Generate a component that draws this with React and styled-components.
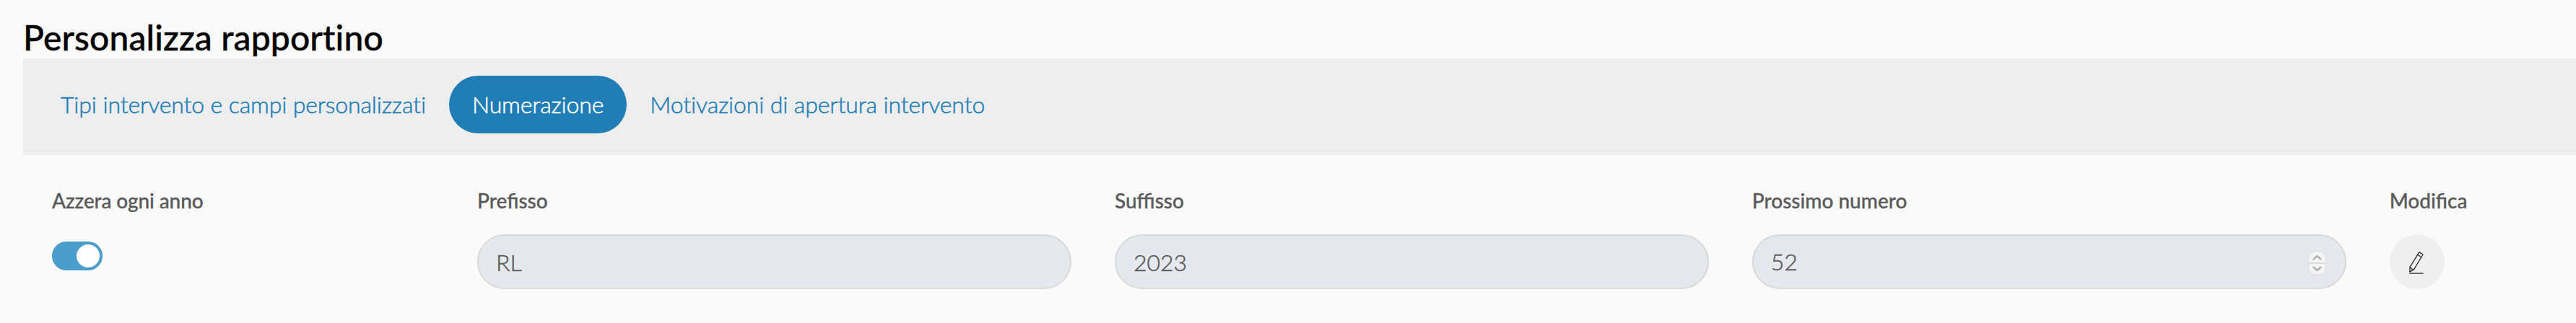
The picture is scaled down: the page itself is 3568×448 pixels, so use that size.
import React from 'react'
import styled, { createGlobalStyle } from 'styled-components'

const COLORS = {
  page: '#fafafa',
  bar: '#eeeeee',
  primary: '#207db5',
  toggle: '#4b9dcb',
  text: '#5a5a5a',
  input: '#e5e9ee',
  border: '#d8d8d8',
}

const GlobalStyle = createGlobalStyle`
  * {
    box-sizing: border-box;
  }

  body {
    margin: 0;
    background: ${COLORS.page};
    font-family: Lato, 'Liberation Sans', sans-serif;
    color: ${COLORS.text};
    overflow: hidden;
  }
`

const Page = styled.main`
  height: 448px;
  padding: 23px 0 0 24px;
  border-left: 8px solid #f9f9f9;
`

const Title = styled.h1`
  margin: 0;
  height: 58px;
  font-size: 48px;
  line-height: 58px;
  font-weight: 500;
  font-variant-ligatures: none;
  letter-spacing: 0.13px;
  color: #000;
  white-space: nowrap;
  -webkit-text-stroke: 0.4px currentColor;
`

const Tabs = styled.nav`
  display: flex;
  height: 134px;
  padding: 24px 20px;
  background: ${COLORS.bar};
`

const Tab = styled.button`
  height: 80px;
  padding: 0 32px 1px;
  border: 0;
  border-radius: 40px;
  background: ${({ $active }) => ($active ? COLORS.primary : 'transparent')};
  color: ${({ $active }) => ($active ? '#fff' : COLORS.primary)};
  font-family: inherit;
  font-size: 32px;
  font-weight: 300;
  font-variant-ligatures: none;
  letter-spacing: -0.13px;
  line-height: 78px;
  white-space: nowrap;
  -webkit-text-stroke: 0.5px currentColor;
`

const Row = styled.div`
  display: grid;
  grid-template-columns: 589.1px repeat(3, 882.85px) auto;
  padding: 44px 0 0 10px;
`

const Field = styled.div`
  display: flex;
  flex-direction: column;
  align-items: flex-start;
  padding: 0 30px;
`

const Label = styled.label`
  height: 66px;
  font-size: 28px;
  line-height: 38px;
  font-weight: 500;
  letter-spacing: ${({ $tight }) => ($tight ? '-0.12px' : 'normal')};
  white-space: nowrap;
  -webkit-text-stroke: 0.3px currentColor;
`

const InputBox = styled.div`
  display: flex;
  align-items: center;
  justify-content: space-between;
  width: 100%;
  height: 76px;
  padding: 0 27px 0 24px;
  border: 2px solid ${COLORS.border};
  border-radius: 38px;
  background: ${COLORS.input};
`

const Input = styled.input`
  flex: 1;
  min-width: 0;
  height: 72px;
  padding: ${({ $raised }) => ($raised ? '0 0 2px' : '0')};
  border: 0;
  background: none;
  color: ${COLORS.text};
  font-family: inherit;
  font-size: 32px;
  font-weight: 300;
  -webkit-text-stroke: 0.5px currentColor;
`

const Toggle = styled.div`
  display: flex;
  justify-content: flex-end;
  width: 70px;
  height: 40px;
  margin-top: 10px;
  padding: 4px;
  border-radius: 20px;
  background: ${COLORS.toggle};
`

const Knob = styled.div`
  width: 32px;
  height: 32px;
  border-radius: 50%;
  background: #fff;
`

const Stepper = styled.div`
  display: flex;
  flex-direction: column;
  gap: 2px;
  width: 23px;
  height: 32px;
  margin-top: 4px;
  border-radius: 9px;
  overflow: hidden;
  background: #dcdcdc;
  box-shadow: 0 0 2px rgba(0, 0, 0, 0.2);
`

const Step = styled.svg`
  width: 23px;
  height: 15px;
  background: #f4f4f5;
  fill: none;
  stroke: #b0b0b0;
  stroke-width: 2.6;
  stroke-linecap: round;
  stroke-linejoin: round;
`

const EditButton = styled.button`
  display: flex;
  align-items: center;
  justify-content: center;
  width: 76px;
  height: 76px;
  padding: 0;
  border: 0;
  border-radius: 50%;
  background: #efefef;
`

const NumberStepper = () =>
  <Stepper>
    <Step viewBox='0 0 23 15'><path d='M6.6 10.2 11.5 6l4.9 4.2' /></Step>
    <Step viewBox='0 0 23 15'><path d='M6.6 4.8 11.5 9l4.9-4.2' /></Step>
  </Stepper>

const Pencil = () =>
  <svg width='32' height='34' viewBox='0 0 32 34' fill='none' stroke='#2b2b2b' strokeWidth='1.3' strokeLinejoin='round' strokeLinecap='round'>
    <path d='M18.8 3.6 24 7 11.6 27.6 5.8 31.1 6.1 24.3Z' />
    <path d='M16.6 7.3 21.8 10.7' />
    <path d='M6.1 24.3 8.6 27.2 11.6 27.6' />
    <path d='M5.8 33.2H24' />
  </svg>

const App = () =>
  <>
    <GlobalStyle />
    <Page>
      <Title>Personalizza rapportino</Title>
      <Tabs>
        <Tab>Tipi intervento e campi personalizzati</Tab>
        <Tab $active>Numerazione</Tab>
        <Tab>Motivazioni di apertura intervento</Tab>
      </Tabs>
      <Row>
        <Field>
          <Label $tight>Azzera ogni anno</Label>
          <Toggle><Knob /></Toggle>
        </Field>
        <Field>
          <Label>Prefisso</Label>
          <InputBox><Input defaultValue='RL' /></InputBox>
        </Field>
        <Field>
          <Label>Suffisso</Label>
          <InputBox><Input defaultValue='2023' /></InputBox>
        </Field>
        <Field>
          <Label>Prossimo numero</Label>
          <InputBox>
            <Input $raised defaultValue='52' />
            <NumberStepper />
          </InputBox>
        </Field>
        <Field>
          <Label>Modifica</Label>
          <EditButton aria-label='Modifica'><Pencil /></EditButton>
        </Field>
      </Row>
    </Page>
  </>

export default App
